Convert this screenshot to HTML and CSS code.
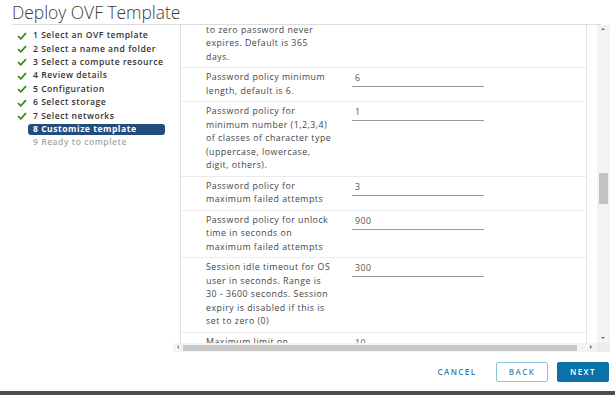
FILE: index.html
```html
<html>

	<head>
		<title> Deploy OVF Template </title>
		<link rel="stylesheet" href="styles.css">
	</head>

	<body>

		<div class="header-area">
			<h1>Deploy OVF Template</h1>
		</div>

		<div class="main-area">

			<div class="step-list">
				<div class="step done"><svg class="check" viewBox="0 0 10 8"><polyline points="1,4.2 3.8,6.8 9,1.2"/></svg><span class="step-label">1 Select an OVF template</span></div>
				<div class="step done"><svg class="check" viewBox="0 0 10 8"><polyline points="1,4.2 3.8,6.8 9,1.2"/></svg><span class="step-label">2 Select a name and folder</span></div>
				<div class="step done"><svg class="check" viewBox="0 0 10 8"><polyline points="1,4.2 3.8,6.8 9,1.2"/></svg><span class="step-label">3 Select a compute resource</span></div>
				<div class="step done"><svg class="check" viewBox="0 0 10 8"><polyline points="1,4.2 3.8,6.8 9,1.2"/></svg><span class="step-label">4 Review details</span></div>
				<div class="step done"><svg class="check" viewBox="0 0 10 8"><polyline points="1,4.2 3.8,6.8 9,1.2"/></svg><span class="step-label">5 Configuration</span></div>
				<div class="step done"><svg class="check" viewBox="0 0 10 8"><polyline points="1,4.2 3.8,6.8 9,1.2"/></svg><span class="step-label">6 Select storage</span></div>
				<div class="step done"><svg class="check" viewBox="0 0 10 8"><polyline points="1,4.2 3.8,6.8 9,1.2"/></svg><span class="step-label">7 Select networks</span></div>
				<div class="step active"><span class="check"></span><span class="step-label">8 Customize template</span></div>
				<div class="step todo"><span class="check"></span><span class="step-label">9 Ready to complete</span></div>
			</div>

			<div class="scroll-box">
				<div class="scroll-view">
					<div class="prop-list">
						<div class="prop-row">
							<div class="prop-label">to zero password never<br>expires. Default is 365<br>days.</div>
						</div>
						<div class="prop-row">
							<div class="prop-label">Password policy minimum<br>length, default is 6.</div>
							<div class="prop-input">6</div>
						</div>
						<div class="prop-row">
							<div class="prop-label">Password policy for<br>minimum number (1,2,3,4)<br>of classes of character type<br>(uppercase, lowercase,<br>digit, others).</div>
							<div class="prop-input">1</div>
						</div>
						<div class="prop-row">
							<div class="prop-label">Password policy for<br>maximum failed attempts</div>
							<div class="prop-input">3</div>
						</div>
						<div class="prop-row">
							<div class="prop-label">Password policy for unlock<br>time in seconds on<br>maximum failed attempts</div>
							<div class="prop-input">900</div>
						</div>
						<div class="prop-row">
							<div class="prop-label">Session idle timeout for OS<br>user in seconds. Range is<br>30 - 3600 seconds. Session<br>expiry is disabled if this is<br>set to zero (0)</div>
							<div class="prop-input">300</div>
						</div>
						<div class="prop-row">
							<div class="prop-label">Maximum limit on</div>
							<div class="prop-input">10</div>
						</div>
					</div>
				</div>
				<div class="v-scrollbar">
					<span class="arrow arrow-up"></span>
					<div class="v-thumb"></div>
					<span class="arrow arrow-down"></span>
				</div>
				<div class="h-scrollbar">
					<span class="arrow arrow-left"></span>
					<div class="h-thumb"></div>
					<span class="arrow arrow-right"></span>
				</div>
				<div class="corner"></div>
			</div>

		</div>

		<div class="footer-area">
			<button class="btn btn-flat">CANCEL</button>
			<button class="btn btn-outline">BACK</button>
			<button class="btn btn-primary">NEXT</button>
		</div>

		<div class="bottom-bar"></div>

	</body>

</html>
```

FILE: styles.css
```css
* {
	margin: 0;
	padding: 0;
	box-sizing: border-box;
}

body {
	width: 615px;
	height: 395px;
	overflow: hidden;
	background: white;
	font-family: "Open Sans", sans-serif;
	color: #3a3a3a;
}

.header-area {
	margin-left: 12px;
	margin-right: 14px;
	height: 25px;
	border-bottom: 1px solid #dcdcdc;
}

.header-area h1 {
	font-size: 17.4px;
	font-weight: 300;
	line-height: 24px;
	color: #3b3b3b;
}

.main-area {
	display: flex;
	height: 327px;
}

.step-list {
	width: 173px;
	padding-top: 4px;
}

.step {
	display: flex;
	align-items: center;
	height: 13.4px;
	padding-left: 17px;
	font-size: 8.6px;
	font-weight: 600;
	letter-spacing: 0.5px;
	color: #333;
	white-space: nowrap;
}

.check {
	width: 16px;
	height: 8px;
	flex: none;
}

.check polyline {
	fill: none;
	stroke: #3d8a1a;
	stroke-width: 1.8;
}

svg.check {
	padding-right: 6px;
}

.step-label {
	padding: 0 5px;
	margin-left: -5px;
	line-height: 11px;
	border-radius: 3px;
}

.active .step-label {
	width: 137px;
	background: #244c7c;
	color: white;
	font-weight: 700;
}

.todo .step-label {
	color: #a9a9a9;
}

.scroll-box {
	position: relative;
	width: 437px;
	display: grid;
	grid-template-columns: 424px 13px;
	grid-template-rows: 318px 9px;
}

.scroll-view {
	overflow: hidden;
	padding-left: 7px;
	padding-right: 10px;
}

.prop-list {
	margin-top: -4.5px;
	border-left: 1px solid #e0e0e0;
	border-right: 1px solid #e0e0e0;
}

.prop-row {
	display: flex;
	padding: 3px 0;
	border-bottom: 1px solid #ebebeb;
	font-size: 8.8px;
	letter-spacing: 0.5px;
	line-height: 13.5px;
	color: #454545;
	white-space: nowrap;
}

.prop-label {
	width: 171px;
	padding-left: 25px;
}

.prop-input {
	width: 132px;
	height: 16px;
	padding-left: 3px;
	padding-top: 1px;
	border-bottom: 1px solid #9a9a9a;
	color: #555;
}

.v-scrollbar {
	position: relative;
	background: #f4f2f4;
}

.v-thumb {
	position: absolute;
	left: 2px;
	top: 148px;
	width: 9px;
	height: 31px;
	background: #c3c3c3;
}

.h-scrollbar {
	position: relative;
	background: #f4f2f4;
}

.h-thumb {
	position: absolute;
	left: 10px;
	right: 20px;
	top: 2px;
	height: 6px;
	background: #c8c8c8;
}

.corner {
	background: #ececec;
}

.arrow {
	position: absolute;
	width: 0;
	height: 0;
	border: 2.5px solid transparent;
}

.arrow-up {
	left: 4px;
	top: 1px;
	border-bottom-color: #6a6a6a;
}

.arrow-down {
	left: 4px;
	bottom: 2px;
	border-top-color: #6a6a6a;
}

.arrow-left {
	left: 2px;
	top: 2px;
	border-right-color: #8a8a8a;
}

.arrow-right {
	right: 3px;
	top: 2px;
	border-left-color: #6a6a6a;
}

.footer-area {
	display: flex;
	justify-content: flex-end;
	align-items: center;
	gap: 9px;
	height: 39px;
	padding-right: 6px;
}

.btn {
	height: 20px;
	font-family: "Open Sans", sans-serif;
	font-size: 8px;
	font-weight: 600;
	letter-spacing: 1.4px;
	border-radius: 2px;
	background: white;
	border: 1px solid transparent;
}

.btn-flat {
	width: 60px;
	color: #2f7fa8;
}

.btn-outline {
	width: 52px;
	color: #4a8bb0;
	border-color: #8cc3dc;
}

.btn-primary {
	width: 52px;
	color: white;
	background: #0a72a8;
	border-color: #0a72a8;
}

.bottom-bar {
	height: 4px;
	background: #4e4e4e;
}
```
